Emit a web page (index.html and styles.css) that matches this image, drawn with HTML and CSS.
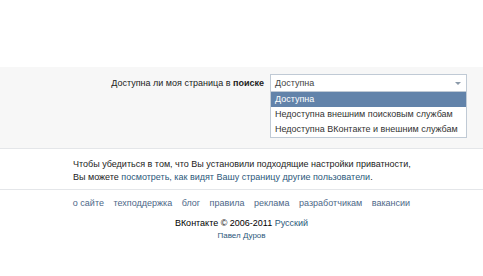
FILE: index.html
```html
<!DOCTYPE html>
<html lang="ru">
<head>
  <meta charset="UTF-8" />
  <title>Настройки приватности</title>
  <link rel="stylesheet" href="styles.css">
</head>
<body>

<div class="top"></div>

<div class="settings">
  <div class="row">
    <div class="label">Доступна ли моя страница в <b>поиске</b></div>
    <div class="dropdown">
      <div class="selected">
        <span>Доступна</span>
        <span class="arrow"></span>
      </div>
      <ul class="options">
        <li class="active">Доступна</li>
        <li>Недоступна внешним поисковым службам</li>
        <li>Недоступна ВКонтакте и внешним службам</li>
      </ul>
    </div>
  </div>
</div>

<div class="note">
  Чтобы убедиться в том, что Вы установили подходящие настройки приватности,<br>
  Вы можете <a href="#">посмотреть, как видят Вашу страницу другие пользователи</a>.
</div>

<div class="footer">
  <div class="links">
    <a href="#">о сайте</a>
    <a href="#">техподдержка</a>
    <a href="#">блог</a>
    <a href="#">правила</a>
    <a href="#">реклама</a>
    <a href="#">разработчикам</a>
    <a href="#">вакансии</a>
  </div>
  <div class="copy">ВКонтакте © 2006-2011 <a href="#">Русский</a></div>
  <div class="author"><a href="#">Павел Дуров</a></div>
</div>

</body>
</html>
```
FILE: styles.css
```css
body {
  margin: 0;
  font-family: "Liberation Sans", Arial, sans-serif;
  font-size: 9px;
  color: #000;
  background: #fff;
  white-space: nowrap;
}
a {
  color: #2b587a;
  text-decoration: none;
}
.top {
  height: 67px;
}
.settings {
  background: #f7f7f7;
  border-bottom: 1px solid #e4e6e9;
  height: 81px;
}
.row {
  display: flex;
  align-items: flex-start;
  padding-top: 7px;
}
.label {
  width: 264px;
  text-align: right;
  padding-right: 6px;
  line-height: 19px;
  color: #222;
}
.dropdown {
  width: 197px;
}
.selected {
  display: flex;
  justify-content: space-between;
  align-items: center;
  height: 16px;
  padding: 0 5px 0 4px;
  background: #fff;
  border: 1px solid #c0cad5;
  color: #444;
}
.arrow {
  width: 0;
  height: 0;
  border-left: 3px solid transparent;
  border-right: 3px solid transparent;
  border-top: 3px solid #8b9aaa;
}
.options {
  list-style: none;
  margin: 0;
  padding: 0;
  background: #fff;
  border: 1px solid #c0cad5;
  border-top: none;
}
.options li {
  height: 15px;
  line-height: 15px;
  padding: 0 4px;
  color: #333;
}
.options li.active {
  background: #6283aa;
  color: #fff;
}
.note {
  padding: 9px 0 0 73px;
  height: 31px;
  line-height: 13px;
  border-bottom: 1px solid #e4e6e9;
  color: #222;
}
.footer {
  text-align: center;
}
.links {
  padding-top: 7px;
  line-height: 13px;
}
.links a {
  margin: 0 3.5px;
  color: #4d6788;
}
.copy {
  margin-top: 7px;
  line-height: 13px;
}
.author {
  font-size: 8px;
  line-height: 12px;
}
```
